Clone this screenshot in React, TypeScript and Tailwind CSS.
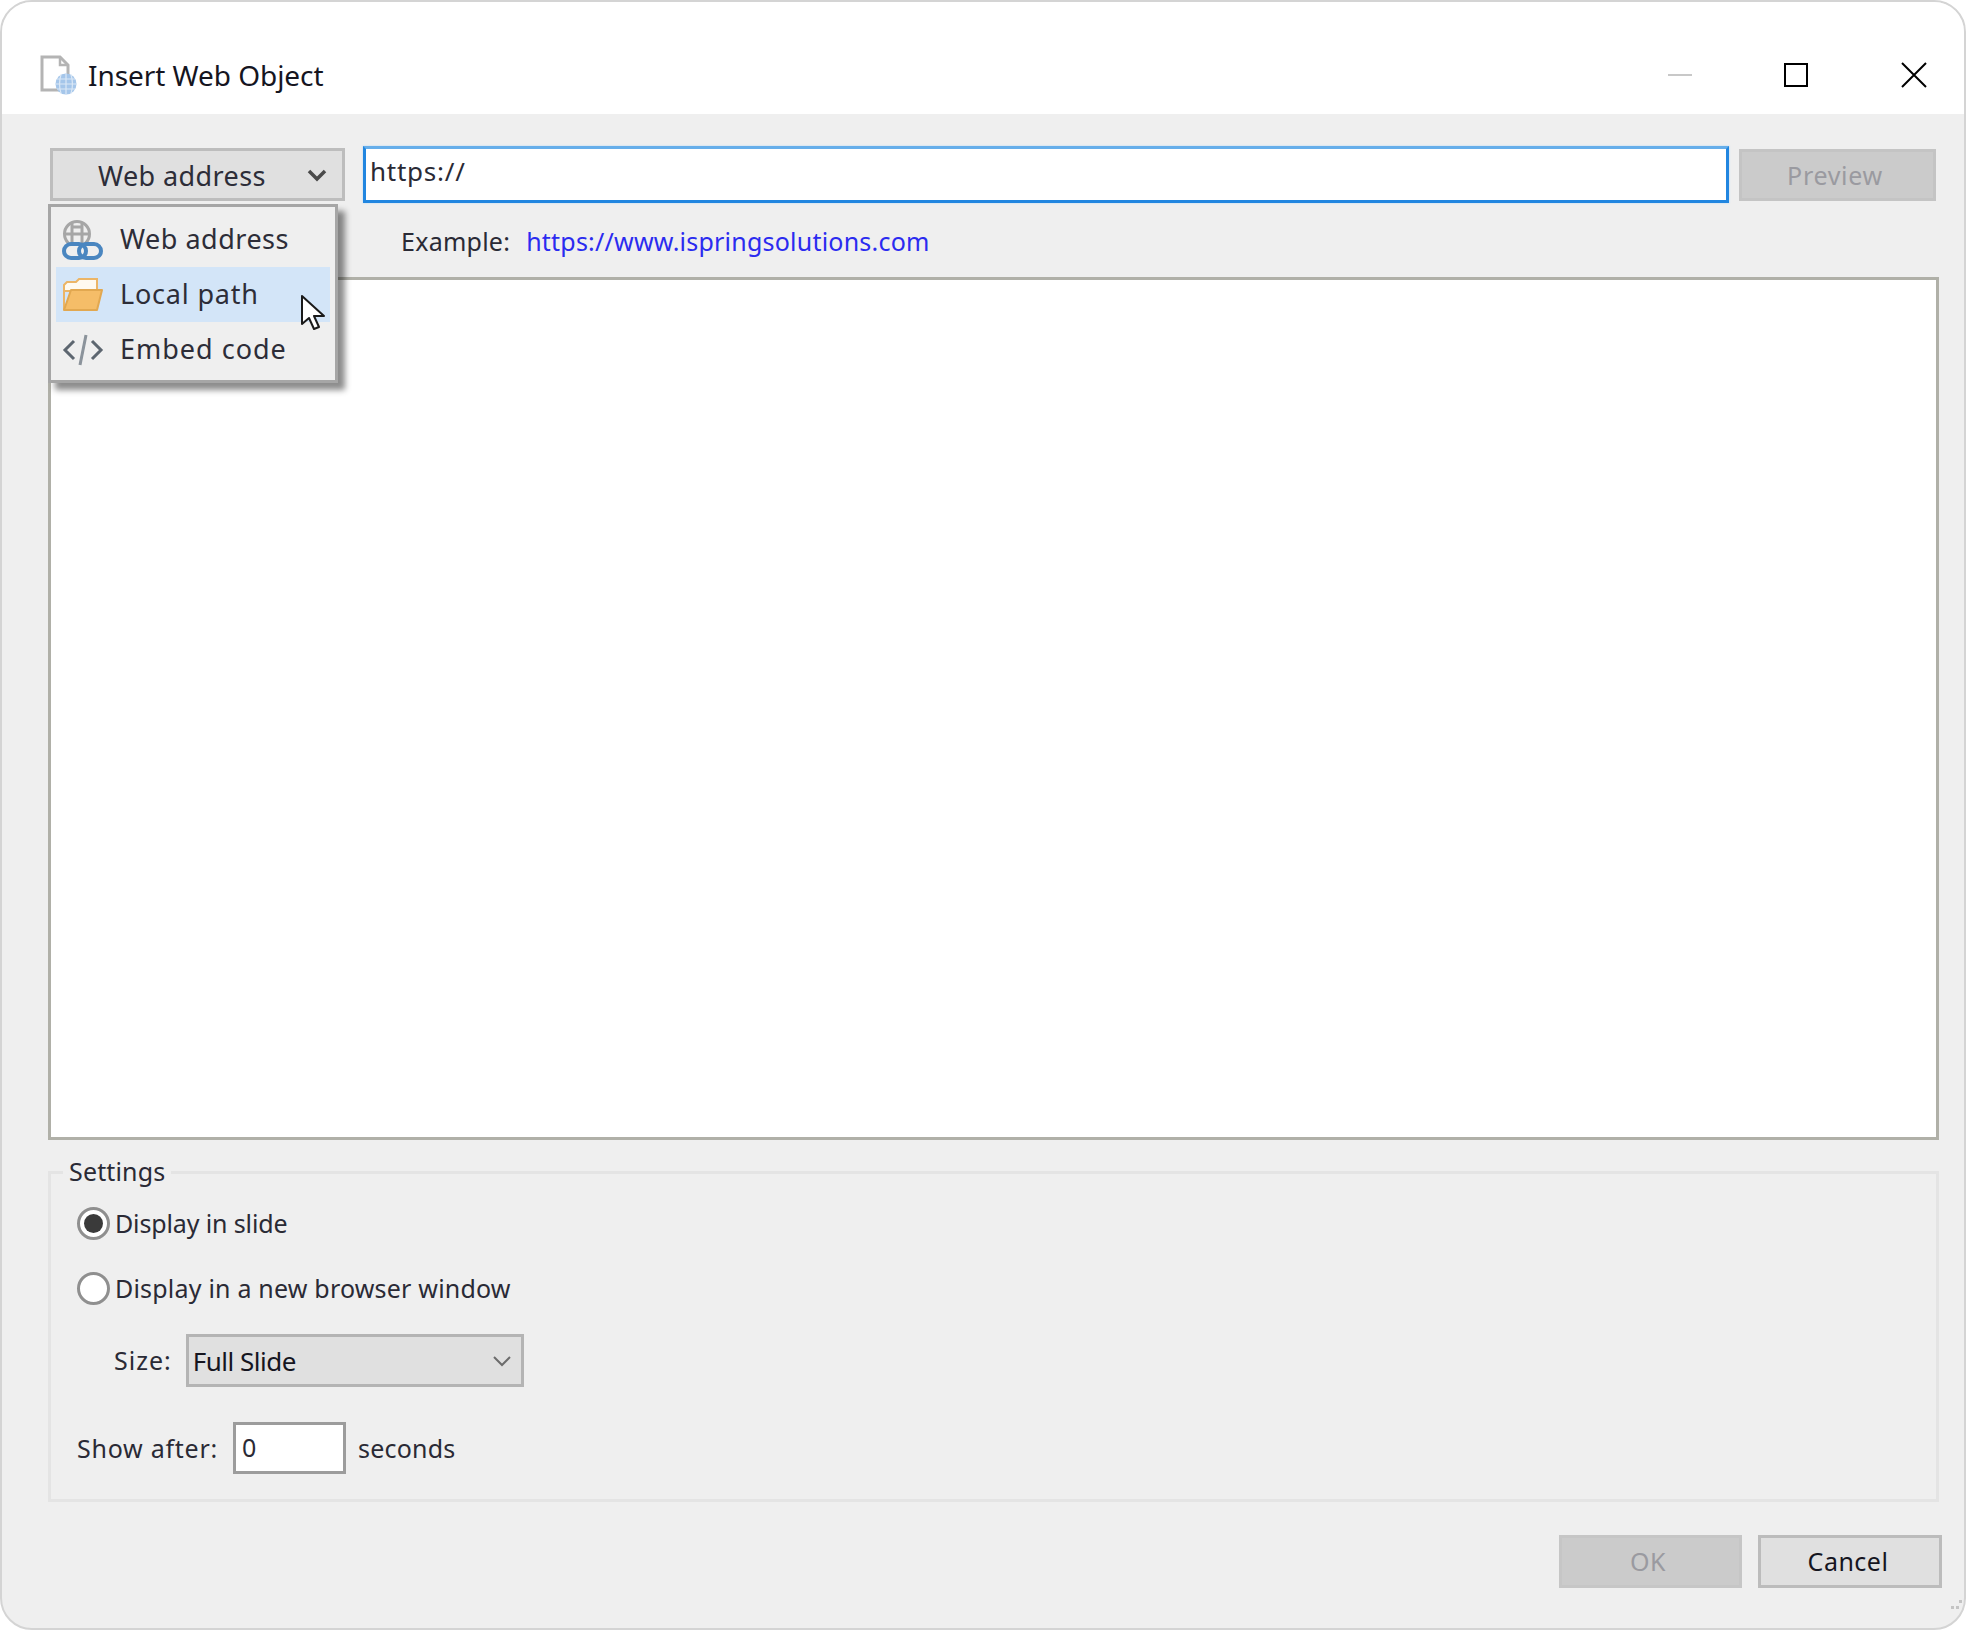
const font = { fontFamily: '"Noto Sans", sans-serif' };

function DocGlobeIcon() {
  return (
    <svg width="38" height="40" viewBox="0 0 38 40" fill="none">
      <path d="M2 2H20L28 10V35H2Z" fill="#fff" stroke="#b4b4b4" stroke-width="3" />
      <path d="M20 2V10H28" stroke="#b4b4b4" stroke-width="2.5" />
      <circle cx="26" cy="29" r="10.5" fill="#a5c6ea" />
      <path d="M15.5 29H36.5M17 24H35M17 34H35M26 18.5V39.5M21 19.5C19 26 19 32 21 38.5M31 19.5C33 26 33 32 31 38.5" stroke="#dbe8f6" stroke-width="1.2" />
    </svg>
  );
}

function WebLinkIcon() {
  return (
    <svg width="42" height="42" viewBox="0 0 42 42" fill="none">
      <circle cx="15" cy="15" r="12.5" stroke="#a6a6a6" stroke-width="3" />
      <path d="M2 15H28M9 8H21M10 3V25M20 3V25" stroke="#a6a6a6" stroke-width="3" />
      <rect x="2" y="25" width="22" height="14" rx="7" fill="#efefef" stroke="#4a86c0" stroke-width="4" />
      <rect x="17" y="25" width="22" height="14" rx="7" fill="none" stroke="#4a86c0" stroke-width="4" />
    </svg>
  );
}

function FolderIcon() {
  return (
    <svg width="42" height="36" viewBox="0 0 42 36" fill="none">
      <path d="M2 33V8L5 5H14L17 2H35V14H2Z" fill="#fffaf0" stroke="#ecb566" stroke-width="2" />
      <path d="M9 13H40L35 33H2Z" fill="#f5bd68" stroke="#e2a850" stroke-width="2" stroke-linejoin="round" />
    </svg>
  );
}

function CodeIcon() {
  return (
    <svg width="42" height="32" viewBox="0 0 42 32" fill="none">
      <path d="M12 7L3 16L12 25M30 7L39 16L30 25" stroke="#5d6670" stroke-width="3" />
      <path d="M24 1L18 31" stroke="#8b939b" stroke-width="3" />
    </svg>
  );
}

function Chevron({ bold }: { bold?: boolean }) {
  return (
    <svg width="20" height="14" viewBox="0 0 20 14" fill="none">
      <path d="M2 3L10 11L18 3" stroke={bold ? "#4a4a4a" : "#6c6c6c"} stroke-width={bold ? 3.5 : 2} />
    </svg>
  );
}

function Cursor() {
  return (
    <svg width="26" height="38" viewBox="0 0 26 38" fill="none">
      <path d="M2 2V30L9 24L14 35L19 33L14 22H24Z" fill="#fff" stroke="#1a1a1a" stroke-width="2" stroke-linejoin="round" />
    </svg>
  );
}

function Radio({ checked, label, wide }: { checked?: boolean; label: string; wide?: boolean }) {
  return (
    <div className="flex h-[34px] items-center">
      <span className="flex h-[33px] w-[33px] items-center justify-center rounded-full border-[3px] border-[#8f8f8f] bg-white">
        {checked && <span className="h-[19px] w-[19px] rounded-full bg-[#3a3a3a]" />}
      </span>
      <span className={wide ? "ml-[5px] text-[25px] leading-none tracking-[0.2px] text-[#2a2a35]" : "ml-[5px] text-[25px] leading-none tracking-[-0.13px] text-[#2a2a35]"}>
        {label}
      </span>
    </div>
  );
}

const menuItems = [
  { label: "Web address", icon: <WebLinkIcon />, row: "flex h-[55px] items-center", text: "ml-[15px] pb-[2px] text-[27px] leading-none tracking-[0.5px] text-[#2d2d38]" },
  { label: "Local path", icon: <FolderIcon />, row: "flex h-[55px] items-center bg-[#d3e5f8]", text: "ml-[15px] pb-[2px] text-[27px] leading-none tracking-[0.8px] text-[#2d2d38]" },
  { label: "Embed code", icon: <CodeIcon />, row: "flex h-[55px] items-center", text: "ml-[15px] pb-[2px] text-[27px] leading-none tracking-[1px] text-[#2d2d38]" },
];

export default function App() {
  return (
    <div style={font} className="h-[1630px] w-[1966px] overflow-hidden bg-white">
      <div className="flex h-[1630px] w-[1966px] flex-col overflow-hidden rounded-[32px] border-2 border-[#d4d4d4] bg-[#efefef]">
        {/* title bar */}
        <div className="flex h-[112px] shrink-0 items-center bg-white pl-[38px] pr-[37px] pt-[34px]">
          <DocGlobeIcon />
          <span className="ml-[10px] text-[28px] leading-none tracking-[-0.05px] text-[#15151f]">Insert Web Object</span>
          <div className="ml-auto flex items-center">
            <span className="h-[2px] w-[24px] bg-[#c8c8c8]" />
            <span className="ml-[92px] h-[24px] w-[24px] border-[2px] border-black" />
            <svg className="ml-[93px]" width="26" height="26" viewBox="0 0 26 26" fill="none">
              <path d="M1 1L25 25M25 1L1 25" stroke="#000" stroke-width="2" />
            </svg>
          </div>
        </div>

        <div className="relative flex flex-1 flex-col pl-[46px] pr-[26px]">
          {/* address row */}
          <div className="mt-[32px] flex h-[57px] items-center">
            <div className="ml-[2px] flex h-[53px] w-[295px] items-center border-[3px] border-[#bdbdbd] bg-[#e0e0e0] pl-[45px] pr-[15px]">
              <span className="pt-[1px] text-[27px] leading-none tracking-[0.4px] text-[#2d2d38]">Web address</span>
              <span className="ml-auto"><Chevron bold /></span>
            </div>
            <div className="ml-[18px] flex h-[57px] w-[1366px] border-[3px] border-[#2186e0] border-t-[#66aeea] bg-white pl-[4px] pt-[6px] shadow-[0_0_2px_#b8d8f4]">
              <span className="text-[26px] leading-[32px] tracking-[0.75px] text-[#2a2a35]">https://</span>
            </div>
            <div className="ml-[10px] flex h-[52px] w-[197px] items-center justify-center border-[3px] border-[#c4c4c4] bg-[#cbcbcb] pr-[5px] pt-[2px]">
              <span className="text-[25px] leading-none tracking-[0.7px] text-[#9a9aa0]">Preview</span>
            </div>
          </div>

          {/* example row */}
          <div className="mt-[21px] flex h-[34px] items-center pl-[353px]">
            <span className="text-[25px] leading-none tracking-[0.25px] text-[#2a2a35]">Example:</span>
            <span className="ml-[16px] text-[25px] leading-none tracking-[0.22px] text-[#2b2bf0]">https://www.ispringsolutions.com</span>
          </div>

          {/* preview area */}
          <div className="mt-[19px] h-[863px] w-[1891px] shrink-0 border-[3px] border-[#b0b0a8] bg-white" />

          {/* settings */}
          <div className="relative mt-[31px] h-[331px] w-[1891px] shrink-0 border-[3px] border-[#e4e4e4] pl-[26px] pt-[32px]">
            <span className="absolute left-[12px] top-[-19px] bg-[#efefef] px-[6px] text-[25px] leading-[32px] tracking-[0.15px] text-[#2a2a35]">Settings</span>
            <Radio checked label="Display in slide" />
            <div className="mt-[31px]">
              <Radio wide label="Display in a new browser window" />
            </div>
            <div className="mt-[29px] flex items-center pl-[37px]">
              <span className="text-[25px] leading-none tracking-[1px] text-[#2a2a35]">Size:</span>
              <div className="ml-[14px] flex h-[53px] w-[338px] items-center justify-between border-[3px] border-[#b4b4b4] bg-[#e0e0e0] pl-[4px] pr-[9px]">
                <span className="text-[26px] leading-none tracking-[-0.5px] text-[#15151f]">Full Slide</span>
                <Chevron />
              </div>
            </div>
            <div className="mt-[35px] flex items-center">
              <span className="text-[25px] leading-none tracking-[0.75px] text-[#2a2a35]">Show after:</span>
              <div className="ml-[15px] h-[52px] w-[113px] border-[3px] border-[#9c9c9c] bg-white pl-[6px] pt-[6px] text-[25px] leading-[32px] text-[#2a2a35]">0</div>
              <span className="ml-[12px] text-[25px] leading-none tracking-[0.2px] text-[#2a2a35]">seconds</span>
            </div>
          </div>

          {/* footer buttons */}
          <div className="mt-[33px] flex justify-end gap-[16px]">
            <div className="flex h-[53px] w-[183px] items-center justify-center border-[3px] border-[#c6c6c6] bg-[#cbcbcb] pr-[5px] text-[25px] leading-none tracking-[0.5px] text-[#9a9aa0]">OK</div>
            <div className="-mr-[4px] flex h-[53px] w-[184px] items-center justify-center border-[3px] border-[#bcbcbc] bg-[#e0e0e0] pr-[4px] text-[25px] leading-none tracking-[0.5px] text-[#15151f]">Cancel</div>
          </div>

          {/* dropdown menu */}
          <div className="absolute left-[46px] top-[90px] flex h-[179px] w-[290px] flex-col border-[3px] border-[#a6a6a6] bg-[#efefef] px-[5px] pt-[5px] shadow-[7px_7px_6px_rgba(0,0,0,0.45)]">
            {menuItems.map((item) => (
              <div key={item.label} className={item.row}>
                <span className="flex w-[49px] items-center justify-center pl-[5px]">{item.icon}</span>
                <span className={item.text}>{item.label}</span>
              </div>
            ))}
          </div>
          <span className="absolute left-[298px] top-[180px]"><Cursor /></span>

          {/* resize grip */}
          <svg className="absolute bottom-[16px] right-[1px]" width="12" height="14" viewBox="0 0 12 14" fill="#c4c4c4">
            <rect x="0" y="8" width="3" height="3" />
            <rect x="5" y="8" width="3" height="3" />
            <rect x="8" y="2" width="3" height="3" />
          </svg>
        </div>
      </div>
    </div>
  );
}
